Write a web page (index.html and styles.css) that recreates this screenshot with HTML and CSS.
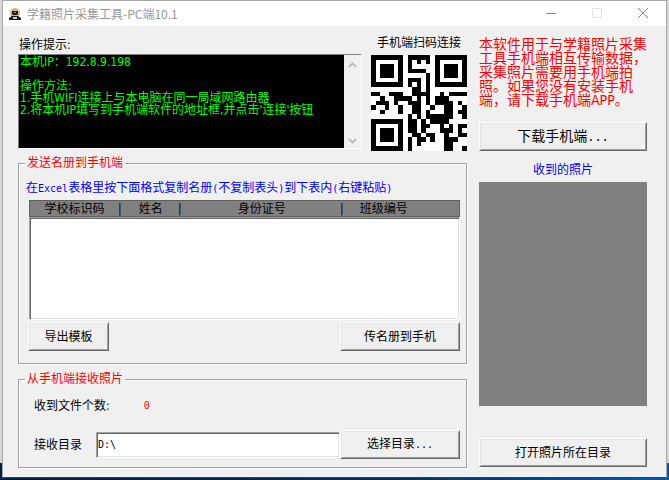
FILE: index.html
```html
<!DOCTYPE html>
<html lang="zh-CN">
<head>
    <meta charset="utf-8">
    <title>学籍照片采集工具-PC端10.1</title>
    <link rel="stylesheet" href="styles.css">
</head>
<body>

<div class="window">
    <header class="titlebar">
        <svg class="app-icon" width="12" height="12" viewBox="0 0 12 12">
            <circle cx="6" cy="5" r="5" fill="#c9bb84"/>
            <path d="M3 3h6v3L8 7H4L3 6z" fill="#1c1c1c"/>
            <path d="M5 4h2v1H5z" fill="#b8a56a"/>
            <path d="M0 12V10l3-2h6l3 2v2z" fill="#171717"/>
            <path d="M4 9h4v2H4z" fill="#d8d0b4"/>
        </svg>
        <h1>学籍照片采集工具-PC端10.1</h1>
        <button class="caption" aria-label="最小化"><svg width="10" height="10"><path d="M0 5.5h10" stroke="#888"/></svg></button>
        <button class="caption" aria-label="最大化" disabled><svg width="10" height="10"><path d="M.5.5h9v9h-9z" fill="none" stroke="#e2e2e2"/></svg></button>
        <button class="caption" aria-label="关闭"><svg width="10" height="10"><path d="M0 0l10 10M10 0L0 10" stroke="#888"/></svg></button>
    </header>

    <main class="content">
        <div class="left">
            <div class="top">
                <div class="tips">
                    <label for="tips">操作提示:</label>
                    <div class="console">
                        <textarea id="tips" readonly>本机IP：192.8.9.198

操作方法:
1.手机WIFI连接上与本电脑在同一局域网路由器
2.将本机IP填写到手机端软件的地址框,并点击'连接'按钮</textarea>
                        <div class="scroll">
                            <svg width="9" height="6"><path d="M1 5l3.500-3.500L8 5" fill="none" stroke="#bfbfbf" stroke-width="2"/></svg>
                            <svg width="9" height="6"><path d="M1 1l3.500 3.500L8 1" fill="none" stroke="#bfbfbf" stroke-width="2"/></svg>
                        </div>
                    </div>
                </div>
                <div class="connect">
                    <span>手机端扫码连接</span>
                    <svg class="qr" viewBox="0 0 21 21" shape-rendering="crispEdges">
                        <path fill="#fff" d="M0 0h21v21H0z"/>
                        <!-- finder patterns -->
                        <path fill="none" stroke="#000" d="M.5.5h6v6h-6zM14.500.5h6v6h-6zM.5 14.500h6v6h-6z"/>
                        <path d="M2 2h3v3H2zM16 2h3v3h-3zM2 16h3v3H2z"/>
                        <!-- data, one line per module row -->
                        <path stroke="#000" d="
                            M8 .5h5
                            M8 1.500h1m1 0h1m1 0h1
                            M8 2.500h1
                            M8 3.500h4
                            M12 4.500h1
                            M8 5.500h3m1 0h1
                            M8 6.500h1m1 0h1m1 0h1
                            M9 7.500h2m1 0h1
                            M0 8.500h2m2 0h3m2 0h4m2 0h1m1 0h4
                            M2 9.500h1m2 0h4m1 0h1m1 0h1m1 0h3
                            M1 10.500h3m1 0h1m2 0h3m1 0h1m1 0h4m1 0h1
                            M0 11.500h1m2 0h1m2 0h1m2 0h2m2 0h1m2 0h2m2 0h1
                            M2 12.500h1m3 0h1m2 0h2m1 0h1m3 0h2m1 0h2
                            M8 13.500h1m1 0h1m1 0h6m2 0h1
                            M8 14.500h2m1 0h1m1 0h4
                            M8 15.500h2m1 0h2m2 0h1m1 0h1m1 0h2
                            M8 16.500h2m1 0h1m3 0h3m1 0h1
                            M9 17.500h2m1 0h2m2 0h1m2 0h2
                            M8 18.500h1m1 0h2m1 0h1m2 0h3
                            M8 19.500h1m1 0h1m5 0h2
                            M8 20.500h1m7 0h2m2 0h1"/>
                    </svg>
                </div>
            </div>

            <fieldset class="roster">
                <legend>发送名册到手机端</legend>
                <p>在<span class="half">Excel</span>表格里按下面格式复制名册<span class="half">(</span>不复制表头<span class="half">)</span>到下表内<span class="half">(</span>右键粘贴<span class="half">)</span></p>
                <table>
                    <thead>
                    <tr>
                        <th class="school">学校标识码</th>
                        <th class="name">姓名</th>
                        <th class="idcard">身份证号</th>
                        <th class="grade">班级编号</th>
                    </tr>
                    </thead>
                    <tbody>
                    <tr>
                        <td colspan="4"><textarea aria-label="名册"></textarea></td>
                    </tr>
                    </tbody>
                </table>
                <div class="actions">
                    <button class="btn export">导出模板</button>
                    <button class="btn send">传名册到手机</button>
                </div>
            </fieldset>

            <fieldset class="receive">
                <legend>从手机端接收照片</legend>
                <div class="count">
                    <span>收到文件个数:</span>
                    <output class="half">0</output>
                </div>
                <div class="folder">
                    <label for="dir">接收目录</label>
                    <input id="dir" type="text" value="D:\">
                    <button class="btn choose">选择目录<span class="half">...</span></button>
                </div>
            </fieldset>
        </div>

        <aside class="right">
            <p class="notice">本软件用于与学籍照片采集工具手机端相互传输数据，采集照片需要用手机端拍照。如果您没有安装手机端，请下载手机端APP。</p>
            <button class="btn download">下载手机端<span class="half">...</span></button>
            <h2>收到的照片</h2>
            <div class="photo"></div>
            <button class="btn open">打开照片所在目录</button>
        </aside>
    </main>
</div>

</body>
</html>
```
FILE: styles.css
```css
* {
    box-sizing: border-box;
}
body {
    margin: 0;
    padding: 0 2px 3px 2px;
    min-height: 100vh;
    display: flex;
    background: linear-gradient(#d6d6d6, #d6d6d6) 0 0 / 100% calc(100% - 18px) no-repeat,
                linear-gradient(90deg, #001c40, #003060 60%, #0058a8);
    font: 12px/12px "DejaVu Sans Condensed", "Liberation Sans", "Noto Sans CJK SC", sans-serif;
    color: #000;
}
h1, h2, p {
    margin: 0;
    font-size: 12px;
    font-weight: normal;
}
button, input, textarea {
    font: inherit;
    color: inherit;
}
/* half-width latin next to 12px hanzi */
.half {
    font-family: "DejaVu Sans Mono", monospace;
    font-size: 10px;
}

.window {
    flex: 1;
    display: flex;
    flex-direction: column;
    background: #f0f0f0;
    border: 1px solid #a8a8a8;
    border-bottom-color: #345;
}
.titlebar {
    display: flex;
    align-items: center;
    height: 25px;
    padding-left: 6px;
    background: #fff;
}
.titlebar h1 {
    flex: 1;
    margin-left: 6px;
    color: #999;
    font-family: "Noto Sans CJK SC", sans-serif;
}
.caption {
    width: 46px;
    height: 25px;
    padding: 0;
    border: 0;
    background: none;
}

.content {
    flex: 1;
    display: grid;
    grid-template-columns: 1fr 168px;
    gap: 12px;
    padding: 11px 19px 9px 15px;
}
.left, .right, .tips, .connect {
    display: flex;
    flex-direction: column;
}
.top {
    display: flex;
    gap: 9px;
}
.tips {
    flex: 1;
}
.tips label {
    padding: 2px 0 3px 1px;
}
.console {
    display: flex;
    height: 95px;
    border: 1px solid;
    border-color: #808080 #fff #fff #808080;
}
.console textarea {
    flex: 1;
    min-width: 0;
    padding: 1px;
    border: 0;
    resize: none;
    overflow: hidden;
    white-space: pre;
    background: #000;
    color: #0f0;
}
.scroll {
    width: 17px;
    padding: 7px 4px 4px;
    display: flex;
    flex-direction: column;
    justify-content: space-between;
}
.connect {
    width: 96px;
    gap: 6px;
    text-align: center;
}
.connect span {
    white-space: nowrap;
}
.qr {
    display: block;
    width: 96px;
    height: 96px;
}

fieldset {
    min-width: 0;
    margin: 0;
    padding: 0 6px 0 10px;
    border: 1px solid #a0a0a0;
    box-shadow: 1px 1px #fff, inset 1px 1px #fff;
}
legend {
    margin-left: -4px;
    padding: 0 2px;
    background: #f0f0f0;
    color: #f00;
}
.roster {
    margin-top: 6px;
    height: 207px;
}
.roster p {
    margin: 13px 0 5px -3px;
    color: #00f;
}
table {
    width: 100%;
    table-layout: fixed;
    border-collapse: collapse;
}
thead {
    background: #808080;
    outline: 1px solid #606060;
    outline-offset: -1px;
}
th {
    height: 17px;
    padding: 0;
    font-weight: normal;
}
th + th::before {
    content: "|";
    float: left;
    margin-left: -2px;
}
.school { width: 91px; }
.name   { width: 60px; }
.idcard { width: 162px; }
.grade  { text-align: left; }
.grade::before {
    margin-right: 16px;
}
td {
    padding: 0;
}
td textarea {
    display: block;
    width: 100%;
    height: 103px;
    border: 1px solid;
    border-color: #a0a0a0 #fff #fff #a0a0a0;
    box-shadow: inset 1px 1px #696969, inset -1px -1px #e3e3e3;
    resize: none;
    background: #fff;
}

.btn {
    height: 29px;
    padding: 0;
    background: #f0f0f0;
    border: 1px solid;
    border-color: #fff #696969 #696969 #fff;
    box-shadow: inset 1px 1px #e3e3e3, inset -1px -1px #a0a0a0;
}
.actions {
    display: flex;
    justify-content: space-between;
    margin: 2px 0 0 -1px;
}
.export { width: 81px; }
.send,
.choose { width: 120px; }

.receive {
    margin-top: 9px;
    height: 95px;
}
.count {
    display: flex;
    gap: 34px;
    padding: 15px 0 0 5px;
}
.count output {
    color: #f00;
}
.folder {
    display: flex;
    align-items: center;
    margin-top: 18px;
}
.folder label {
    padding: 0 14px 0 5px;
}
.folder input {
    flex: 1;
    min-width: 0;
    height: 26px;
    padding: 0 1px;
    border: 1px solid;
    border-color: #a0a0a0 #fff #fff #a0a0a0;
    box-shadow: inset 1px 1px #696969, inset -1px -1px #e3e3e3;
    background: #fff;
    font-family: "DejaVu Sans Mono", monospace;
    font-size: 10px;
}

.notice {
    min-height: 70px;
    color: #f00;
    font-size: 14px;
    line-height: 14px;
}
.right h2 {
    margin: 13px 0 6px;
    text-align: center;
    color: #00f;
}
.download {
    margin-top: 15px;
    font-size: 14px;
}
.download .half {
    font-size: 12px;
}
.photo {
    height: 224px;
    margin-bottom: 32px;
    background: #808080;
}
```
